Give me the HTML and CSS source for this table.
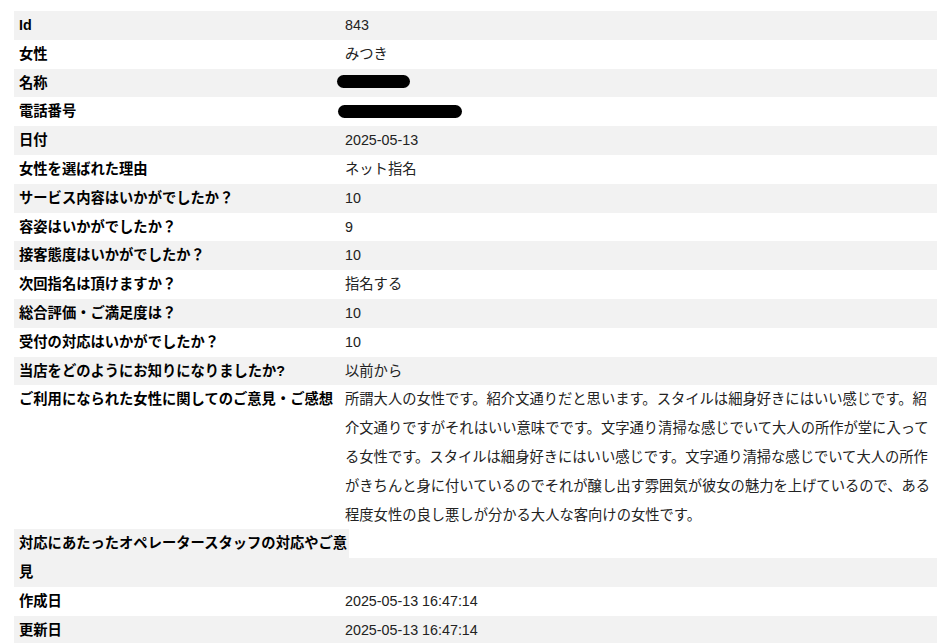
FILE: index.html
```html
<!DOCTYPE html>
<html lang="ja">
<head>
<meta charset="utf-8">
<title>アンケート詳細</title>
<link rel="stylesheet" href="styles.css">
</head>
<body>
<div class="detail">
  <div class="row"><div class="label">Id</div><div class="value">843</div></div>
  <div class="row"><div class="label">女性</div><div class="value">みつき</div></div>
  <div class="row"><div class="label">名称</div><div class="value value--redacted"><span class="redact redact--name"></span></div></div>
  <div class="row"><div class="label">電話番号</div><div class="value value--redacted"><span class="redact redact--phone"></span></div></div>
  <div class="row"><div class="label">日付</div><div class="value">2025-05-13</div></div>
  <div class="row"><div class="label">女性を選ばれた理由</div><div class="value">ネット指名</div></div>
  <div class="row"><div class="label">サービス内容はいかがでしたか？</div><div class="value">10</div></div>
  <div class="row"><div class="label">容姿はいかがでしたか？</div><div class="value">9</div></div>
  <div class="row"><div class="label">接客態度はいかがでしたか？</div><div class="value">10</div></div>
  <div class="row"><div class="label">次回指名は頂けますか？</div><div class="value">指名する</div></div>
  <div class="row"><div class="label">総合評価・ご満足度は？</div><div class="value">10</div></div>
  <div class="row"><div class="label">受付の対応はいかがでしたか？</div><div class="value">10</div></div>
  <div class="row"><div class="label">当店をどのようにお知りになりましたか?</div><div class="value">以前から</div></div>
  <div class="row"><div class="label">ご利用になられた女性に関してのご意見・ご感想</div><div class="value">所謂大人の女性です。紹介文通りだと思います。スタイルは細身好きにはいい感じです。紹介文通りですがそれはいい意味でです。文字通り清掃な感じでいて大人の所作が堂に入ってる女性です。スタイルは細身好きにはいい感じです。文字通り清掃な感じでいて大人の所作がきちんと身に付いているのでそれが醸し出す雰囲気が彼女の魅力を上げているので、ある程度女性の良し悪しが分かる大人な客向けの女性です。</div></div>
  <div class="row row--wide-label"><div class="label">対応にあたったオペレータースタッフの対応やご意見</div><div class="value value--empty"><div class="blank-line"></div></div></div>
  <div class="row"><div class="label">作成日</div><div class="value">2025-05-13 16:47:14</div></div>
  <div class="row"><div class="label">更新日</div><div class="value">2025-05-13 16:47:14</div></div>
</div>
</body>
</html>
```

FILE: styles.css
```css
html, body {
  margin: 0;
  padding: 0;
  background: #fff;
}

body {
  font-family: "Liberation Sans", "Noto Sans CJK JP", sans-serif;
  font-size: 14.3px;
  line-height: 28.8px;
  color: #222;
}

.detail {
  padding: 11px 4px 0 14px;
}

.row {
  display: grid;
  grid-template-columns: 331px 1fr;
}

.row:nth-child(odd) {
  background: #f2f2f2;
}

.row--wide-label {
  grid-template-columns: 335px 1fr;
}

.label {
  padding-left: 5px;
  font-weight: bold;
  color: #000;
}

.value {
  color: #222;
}

.value--redacted {
  display: flex;
  align-items: center;
}

.redact {
  display: block;
  height: 13px;
  border-radius: 7px;
  background: #000;
  margin-left: -8px;
  margin-top: -2px;
}

.redact--name {
  width: 73px;
}

.redact--phone {
  width: 124px;
  margin-left: -7px;
  margin-top: 0;
}

.blank-line {
  height: 28.8px;
  background: #fff;
}
```
